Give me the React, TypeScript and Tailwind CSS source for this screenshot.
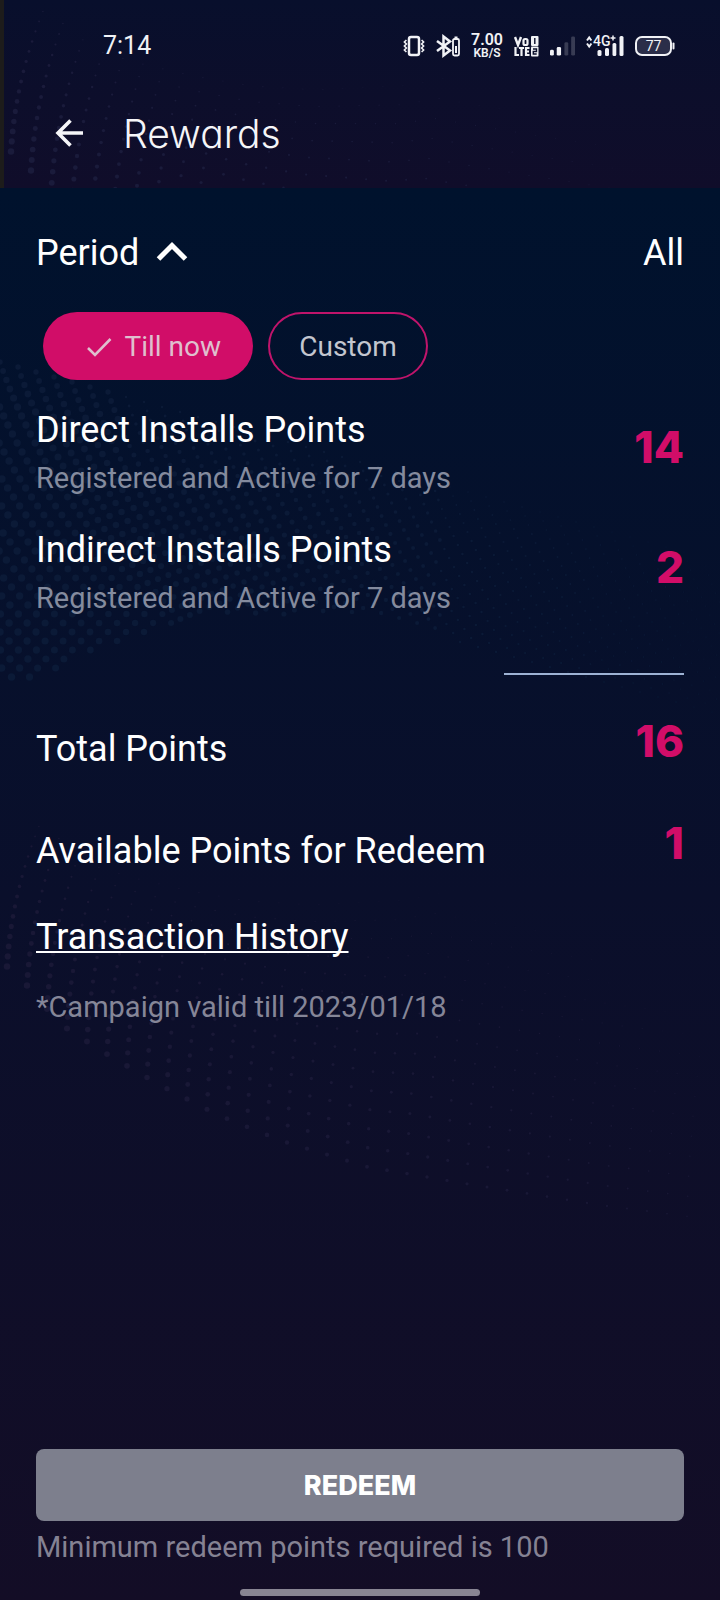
import { useState } from "react";

type Dot = { x: number; y: number; r: number };

function edge(x: number): number {
  const points = [
    [0, 145], [24, 167], [60, 209], [100, 235], [158, 269], [218, 300],
    [282, 326], [368, 352], [480, 371], [600, 390], [740, 408],
  ];
  for (let i = 1; i < points.length; i++) {
    const [x1, y1] = points[i];
    const [x0, y0] = points[i - 1];
    if (x <= x1) return y0 + ((x - x0) / (x1 - x0)) * (y1 - y0);
  }
  return points[points.length - 1][1];
}

// Columns of dots that hang down to a curved lower edge and thin out upwards.
function tailDots(): Dot[] {
  const dots: Dot[] = [];
  for (let i = 0; i < 35; i++) {
    const base = 7 + i * 20;
    const step = 10 + Math.min(i, 20) * 0.5;
    for (let k = 0; k < 15; k++) {
      const x = base + k * k * 0.12 + k * 0.6;
      const y = edge(base) - k * step;
      const r = 3.3 * (1 - base / 900) * (1 - k / 18);
      if (y > 8 && r > 0.4) dots.push({ x, y, r });
    }
  }
  return dots;
}

// A dense sheet that falls from the upper left towards the lower right.
function sheetDots(): Dot[] {
  const dots: Dot[] = [];
  for (let i = -12; i < 42; i++) {
    for (let k = 0; k < 36; k++) {
      const x = i * 18 + k * 3 + k * k * 0.1;
      const y = 362 + Math.max(0, i) * 5 + k * 9;
      const floor = x < 200 ? 690 - x * 0.38 : x < 360 ? 614 : 614 + (x - 360) * 0.28;
      if (x < -2 || x > 724 || y > floor) continue;
      const top = 358 + x * 0.17;
      if (y < top) continue;
      const depth = Math.min(1, (y - top) / 140 + (x < 120 ? 0.7 : 0.25));
      const r = 4.2 * (1 - x / 900) * depth * (x > 440 ? 0.6 : 0.9);
      if (r > 0.4) dots.push({ x, y, r });
    }
  }
  return dots;
}

const TAIL = tailDots();
const SHEET = sheetDots();

function Dots({ dots, dy = 0, className }: { dots: Dot[]; dy?: number; className: string }) {
  return (
    <g className={className}>
      {dots.map((d, i) => (
        <circle key={i} cx={d.x} cy={d.y + dy} r={d.r} />
      ))}
    </g>
  );
}

function StatusIcons() {
  return (
    <div className="flex items-center gap-[11px] text-[#f1f2f6]">
      <svg width="22" height="24" viewBox="0 0 22 24" fill="none" stroke="currentColor" aria-label="Vibrate">
        <rect x="6" y="3" width="10" height="18" rx="2" strokeWidth="2.500" />
        <path d="M3.400 6l-2 2 2 2-2 2 2 2-2 2 2 2M18.600 6l2 2-2 2 2 2-2 2 2 2-2 2" strokeWidth="1.600" />
      </svg>
      <svg width="24" height="24" viewBox="0 0 24 24" fill="none" stroke="currentColor" aria-label="Bluetooth">
        <path d="M1 7l13 9.500-6.500 5V2.500l6.500 5L1 17" strokeWidth="2.500" />
        <rect x="17" y="5" width="6" height="16.500" rx="1.500" strokeWidth="1.800" />
        <path d="M18.500 3.500h3M20 12v7" strokeWidth="2" />
      </svg>
      <div className="flex w-8 flex-col items-center font-semibold">
        <span className="text-[16px] leading-[14px]">7.00</span>
        <span className="text-[12px] leading-[12px]">KB/S</span>
      </div>
      <svg width="25" height="24" viewBox="0 0 25 24" fill="currentColor" aria-label="VoLTE 1 2">
        <path d="M1 3l3 8 3-8" fill="none" stroke="currentColor" strokeWidth="2.400" />
        <rect x="9.500" y="5" width="4" height="6" rx="1.500" fill="none" stroke="currentColor" strokeWidth="2.200" />
        <path d="M1.500 13v8H5M5 14h5M7.500 14v8M15.500 14H12v7h3.500M12 17.500h3" fill="none" stroke="currentColor" strokeWidth="2.200" />
        <rect x="17" y="2" width="7.500" height="10" rx="1" />
        <rect x="17" y="12.500" width="7.500" height="10" rx="1" />
        <path d="M20.800 4v6M19 15h3.500v2.500H19.300V20h3.400" fill="none" stroke="#0a0f2b" strokeWidth="1.400" />
      </svg>
      <svg width="25" height="24" viewBox="0 0 26 24" fill="currentColor" aria-label="Signal, SIM 1">
        <rect x="0" y="16" width="4" height="6" rx="1.500" />
        <rect x="7" y="13" width="4.500" height="9" rx="1.500" />
        <rect x="15" y="8" width="4" height="14" rx="1.500" opacity=".2" />
        <rect x="22" y="2" width="4" height="20" rx="1.500" opacity=".2" />
      </svg>
      <svg width="38" height="24" viewBox="0 0 38 24" fill="currentColor" aria-label="Signal, SIM 2">
        <path d="M1 6.500L3.200 3.500 5.400 6.500M1 9.500l2.200 3 2.200-3" fill="none" stroke="currentColor" strokeWidth="2" />
        <text x="7" y="12" fontSize="14" fontWeight="500">4G</text>
        <path d="M24.500 4h5M27 1.500v5" stroke="currentColor" strokeWidth="1.500" />
        <rect x="11.500" y="16" width="4" height="6" rx="1.500" />
        <rect x="19" y="14" width="4" height="8" rx="1.500" />
        <rect x="26.500" y="9" width="3.800" height="13" rx="1.500" />
        <rect x="33.500" y="2" width="4" height="20" rx="1.500" />
      </svg>
      <svg width="40" height="24" viewBox="0 0 40 24" aria-label="Battery 77 percent">
        <rect x="1" y="3" width="35" height="18" rx="6" fill="#2b2e49" stroke="currentColor" strokeWidth="2" />
        <rect x="37.500" y="8.500" width="2" height="7" rx="1" fill="currentColor" />
        <text x="18.500" y="17" fontSize="14" textAnchor="middle" fill="currentColor">77</text>
      </svg>
    </div>
  );
}

function Header() {
  return (
    <header className="relative overflow-hidden border-l-4 border-[#1d1c1b] bg-linear-to-b from-[#080f2c] to-[#100d2a]">
      <svg className="absolute inset-0 h-full w-full" aria-hidden="true">
        <Dots dots={TAIL} className="fill-[#1a1b3b]" />
      </svg>
      <div className="relative flex h-[92px] items-center justify-between pr-[45px] pl-[99px]">
        <time className="text-[25px] leading-8 text-[#f1f2f6]">7:14</time>
        <StatusIcons />
      </div>
      <div className="relative flex h-24 items-start gap-[38px] pt-4 pl-[51px]">
        <button type="button" aria-label="Back" className="flex h-[50px] items-center text-[#f5f5f8]">
          <svg width="30" height="30" viewBox="0 0 30 30" fill="none" stroke="currentColor" strokeWidth="3.600">
            <path d="M28 15H4M15.500 2.500L3 15l12.500 12.500" />
          </svg>
        </button>
        <h1 className="font-['Inter',sans-serif] text-[39px] leading-[52px] font-light text-[#f5f5f8] [font-feature-settings:'cv11']">Rewards</h1>
      </div>
    </header>
  );
}

function Points({ children }: { children: number }) {
  return (
    <span className="font-['Inter',sans-serif] text-[44px] leading-[54px] font-extrabold text-[#d10d68]">{children}</span>
  );
}

function InstallRow({ title, points }: { title: string; points: number }) {
  return (
    <div className="flex h-[120px] items-start justify-between">
      <div>
        <h2 className="text-[36px] leading-[44px]">{title}</h2>
        <p className="pt-1.5 text-[29px] leading-10 text-[#848b9e]">Registered and Active for 7 days</p>
      </div>
      <div className="pt-3">
        <Points>{points}</Points>
      </div>
    </div>
  );
}

export default function App() {
  const [period, setPeriod] = useState("till-now");
  return (
    <div className="flex min-h-screen flex-col overflow-hidden bg-[#120d26] font-['Roboto',sans-serif] text-white">
      <Header />
      <main className="relative flex grow flex-col bg-linear-to-b from-[#00122d] via-[#0a0f2b] via-50% to-[#130d26] px-9">
        <svg className="absolute inset-0 h-full w-full" aria-hidden="true">
          <Dots dots={SHEET} dy={-188} className="fill-[#0b1a37]" />
          <Dots dots={TAIL} dy={627} className="fill-[#191836]" />
        </svg>

        <div className="relative flex items-center justify-between pt-[43px] text-[36px] leading-[44px]">
          <button type="button" aria-expanded="true" className="flex items-center gap-[17px]">
            Period
            <svg width="32" height="24" viewBox="0 0 32 24" fill="none" stroke="currentColor" strokeWidth="5">
              <path d="M2.500 18L16 4.500 29.500 18" />
            </svg>
          </button>
          <span>All</span>
        </div>

        <div role="group" aria-label="Period" className="relative flex gap-[15px] pt-[37px] pl-[7px] text-[28px]">
          <button
            type="button"
            aria-pressed={period === "till-now"}
            onClick={() => setPeriod("till-now")}
            className="flex h-[68px] min-w-[210px] items-center justify-end gap-3 rounded-full bg-[#d10d68] pt-0.5 pr-8 pl-10 text-[#dfbfce]"
          >
            <svg width="26" height="22" viewBox="0 0 26 22" fill="none" stroke="currentColor" strokeWidth="2.600">
              <path d="M2 12l7 7L24.500 3" />
            </svg>
            Till now
          </button>
          <button
            type="button"
            aria-pressed={period === "custom"}
            onClick={() => setPeriod("custom")}
            className="h-[68px] min-w-[160px] rounded-full border-2 border-[#c0146b] px-7 pt-0.5 text-[#c3c6cf]"
          >
            Custom
          </button>
        </div>

        <section className="relative pt-7">
          <InstallRow title="Direct Installs Points" points={14} />
          <InstallRow title="Indirect Installs Points" points={2} />
          <hr className="mt-[25px] ml-auto w-[180px] border-t-2 border-[#9db2d4]" />
          <div className="flex items-start justify-between pt-[39px]">
            <h2 className="pt-[13px] text-[36px] leading-[44px]">Total Points</h2>
            <Points>{16}</Points>
          </div>
          <div className="flex items-start justify-between pt-[45px]">
            <h2 className="pt-[13px] text-[36px] leading-[44px]">Available Points for Redeem</h2>
            <Points>{1}</Points>
          </div>
          <a href="#history" className="mt-[42px] block w-fit text-[36px] leading-[44px] underline decoration-2 underline-offset-2 [text-decoration-skip-ink:none]">
            Transaction History
          </a>
          <p className="pt-7 text-[29px] leading-10 text-[#858698]">*Campaign valid till 2023/01/18</p>
        </section>

        <footer className="relative mt-auto flex flex-col pb-1">
          <button type="button" className="h-[72px] rounded-lg bg-[#7d7f8d] pt-0.5 font-['Inter',sans-serif] text-[27px] font-extrabold text-white">
            REDEEM
          </button>
          <p className="pt-1.5 text-[29px] leading-10 text-[#858293]">Minimum redeem points required is 100</p>
          <div className="mt-[22px] h-[7px] w-60 self-center rounded-full bg-[#888593]" />
        </footer>
      </main>
    </div>
  );
}
